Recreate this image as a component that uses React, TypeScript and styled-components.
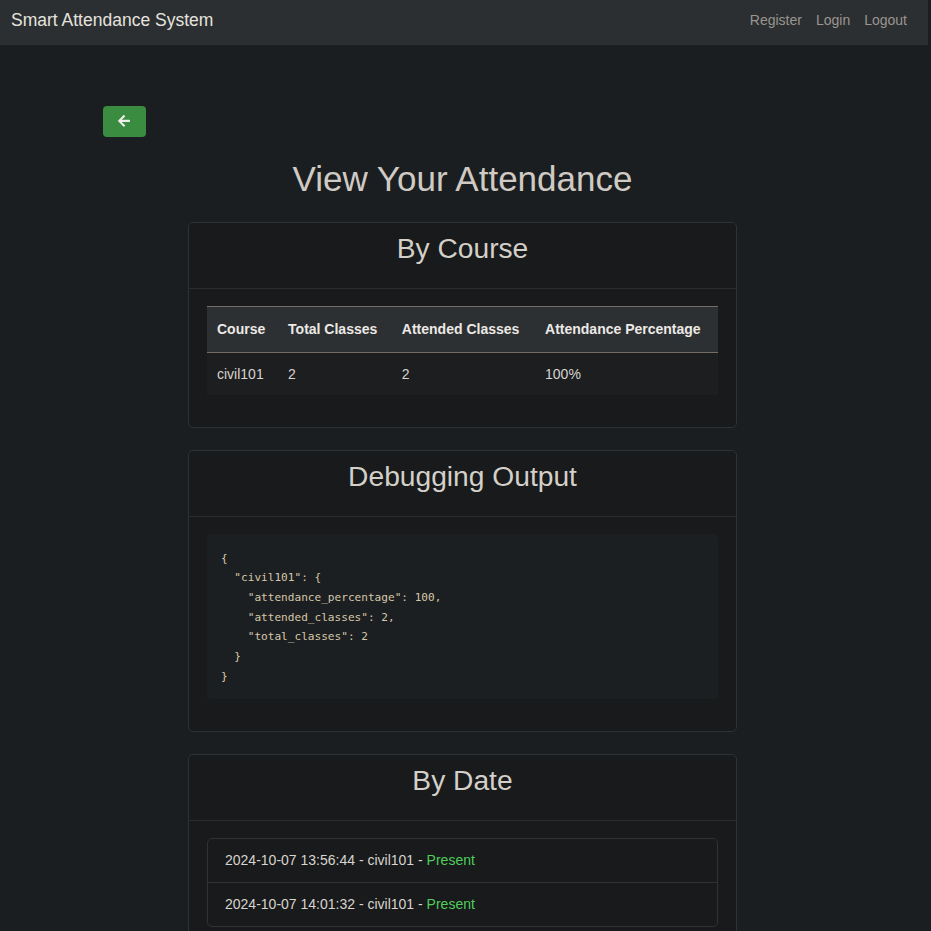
import React from "react";
import styled, { createGlobalStyle } from "styled-components";

const GlobalStyle = createGlobalStyle`
  html, body {
    margin: 0;
    padding: 0;
    background: #1b1e20;
    overflow: hidden;
  }
  body {
    font-family: "Liberation Sans", Arial, sans-serif;
    color: #d8d4cf;
    font-size: 16px;
    line-height: 1.5;
  }
  * { box-sizing: border-box; }
`;

const Shell = styled.div`
  margin-right: 3px;
`;

const NavBar = styled.nav`
  height: 45px;
  background: #2b2f32;
  display: flex;
  align-items: center;
  justify-content: space-between;
  padding: 0 14px 0 11px;
`;

const Brand = styled.a`
  font-size: 17.5px;
  color: #e6e3df;
  text-decoration: none;
  line-height: 1;
  margin-top: -4px;
`;

const NavLinks = styled.div`
  display: flex;
  margin-top: -4px;
`;

const NavLink = styled.a`
  font-size: 14px;
  color: #9a958e;
  text-decoration: none;
  padding: 0 7px;
`;

const Main = styled.main`
  padding: 61px 103px 0;
`;

const BackButton = styled.button`
  width: 43px;
  height: 31px;
  border: none;
  border-radius: 4px;
  background: #3a8d40;
  display: flex;
  align-items: center;
  justify-content: center;
  padding: 0;
  svg {
    display: block;
    margin-top: -2px;
    margin-left: -2px;
  }
`;

const Column = styled.div`
  width: 549px;
  margin-left: 85px;
  display: flex;
  flex-direction: column;
  gap: 21.5px;
`;

const PageTitle = styled.h1`
  font-size: 35px;
  font-weight: 400;
  line-height: 1.2;
  color: #cfcac3;
  text-align: center;
  margin: 21px 0 0.5px;
`;

const Card = styled.section`
  background: #181a1b;
  border: 1px solid #2e3234;
  border-radius: 5px;
`;

const CardHeader = styled.header`
  padding: 9px 16px 0;
  border-bottom: 1px solid #2a2d2f;
  height: 66px;
`;

const CardTitle = styled.h2`
  margin: 0;
  font-size: 28.2px;
  font-weight: 400;
  line-height: 1.2;
  text-align: center;
  color: #d3cfc9;
`;

const CardBody = styled.div`
  padding: 17px 18px 16px;
`;

const Table = styled.table`
  width: 100%;
  border-collapse: collapse;
  font-size: 14px;
  line-height: 21px;
`;

const HeadCell = styled.th`
  text-align: left;
  font-weight: 700;
  color: #ece9e5;
  background: #2c3033;
  padding: 12px 10px;
  border-top: 1px solid #736d66;
  border-bottom: 1px solid #736d66;
  white-space: nowrap;
`;

const BodyCell = styled.td`
  padding: 11px 10px 10px;
  color: #d8d4cf;
  background: #1c1e1f;
`;

const TableGap = styled.div`
  height: 16px;
`;

const Pre = styled.pre`
  margin: 0 0 16px;
  background: #1c1f21;
  padding: 15px 14px 13px;
  font-family: "DejaVu Sans Mono", "Liberation Mono", monospace;
  font-size: 11.1px;
  line-height: 19.67px;
  color: #d6c8a9;
  border-radius: 3px;
`;

const ListGroup = styled.ul`
  list-style: none;
  margin: 0;
  padding: 0;
  border: 1px solid #2f3335;
  border-radius: 5px;
`;

const ListItem = styled.li`
  padding: 11px 17px;
  font-size: 14px;
  line-height: 21px;
  color: #d8d4cf;
  & + & {
    border-top: 1px solid #2f3335;
  }
`;

const Status = styled.span`
  color: #4fcf5c;
`;

const ArrowLeft = () => (
  <svg width="12" height="13.7" viewBox="0 0 448 512" aria-hidden="true">
    <path
      fill="#f0f0ec"
      d="M257.5 445.1l-22.2 22.2c-9.4 9.4-24.6 9.4-33.9 0L7 273c-9.4-9.4-9.4-24.6 0-33.9L201.4 44.7c9.4-9.4 24.6-9.4 33.9 0l22.2 22.2c9.5 9.5 9.3 25-.4 34.3L136.6 216H424c13.3 0 24 10.7 24 24v32c0 13.3-10.7 24-24 24H136.6l120.5 114.8c9.8 9.3 10 24.8.4 34.3z"
    />
  </svg>
);

const debugJson = `{
  "civil101": {
    "attendance_percentage": 100,
    "attended_classes": 2,
    "total_classes": 2
  }
}`;

const records = [
  { when: "2024-10-07 13:56:44", course: "civil101", status: "Present" },
  { when: "2024-10-07 14:01:32", course: "civil101", status: "Present" },
];

export default function App() {
  return (
    <>
      <GlobalStyle />
      <Shell>
        <NavBar>
          <Brand href="#">Smart Attendance System</Brand>
          <NavLinks>
            <NavLink href="#">Register</NavLink>
            <NavLink href="#">Login</NavLink>
            <NavLink href="#">Logout</NavLink>
          </NavLinks>
        </NavBar>
        <Main>
          <BackButton aria-label="Back">
            <ArrowLeft />
          </BackButton>
          <Column>
            <PageTitle>View Your Attendance</PageTitle>
            <Card>
              <CardHeader>
                <CardTitle>By Course</CardTitle>
              </CardHeader>
              <CardBody>
                <Table>
                  <thead>
                    <tr>
                      <HeadCell>Course</HeadCell>
                      <HeadCell>Total Classes</HeadCell>
                      <HeadCell>Attended Classes</HeadCell>
                      <HeadCell>Attendance Percentage</HeadCell>
                    </tr>
                  </thead>
                  <tbody>
                    <tr>
                      <BodyCell>civil101</BodyCell>
                      <BodyCell>2</BodyCell>
                      <BodyCell>2</BodyCell>
                      <BodyCell>100%</BodyCell>
                    </tr>
                  </tbody>
                </Table>
                <TableGap />
              </CardBody>
            </Card>
            <Card>
              <CardHeader>
                <CardTitle>Debugging Output</CardTitle>
              </CardHeader>
              <CardBody>
                <Pre>{debugJson}</Pre>
              </CardBody>
            </Card>
            <Card>
              <CardHeader>
                <CardTitle>By Date</CardTitle>
              </CardHeader>
              <CardBody>
                <ListGroup>
                  {records.map((r) => (
                    <ListItem key={r.when}>
                      {r.when} - {r.course} - <Status>{r.status}</Status>
                    </ListItem>
                  ))}
                </ListGroup>
              </CardBody>
            </Card>
          </Column>
        </Main>
      </Shell>
    </>
  );
}
